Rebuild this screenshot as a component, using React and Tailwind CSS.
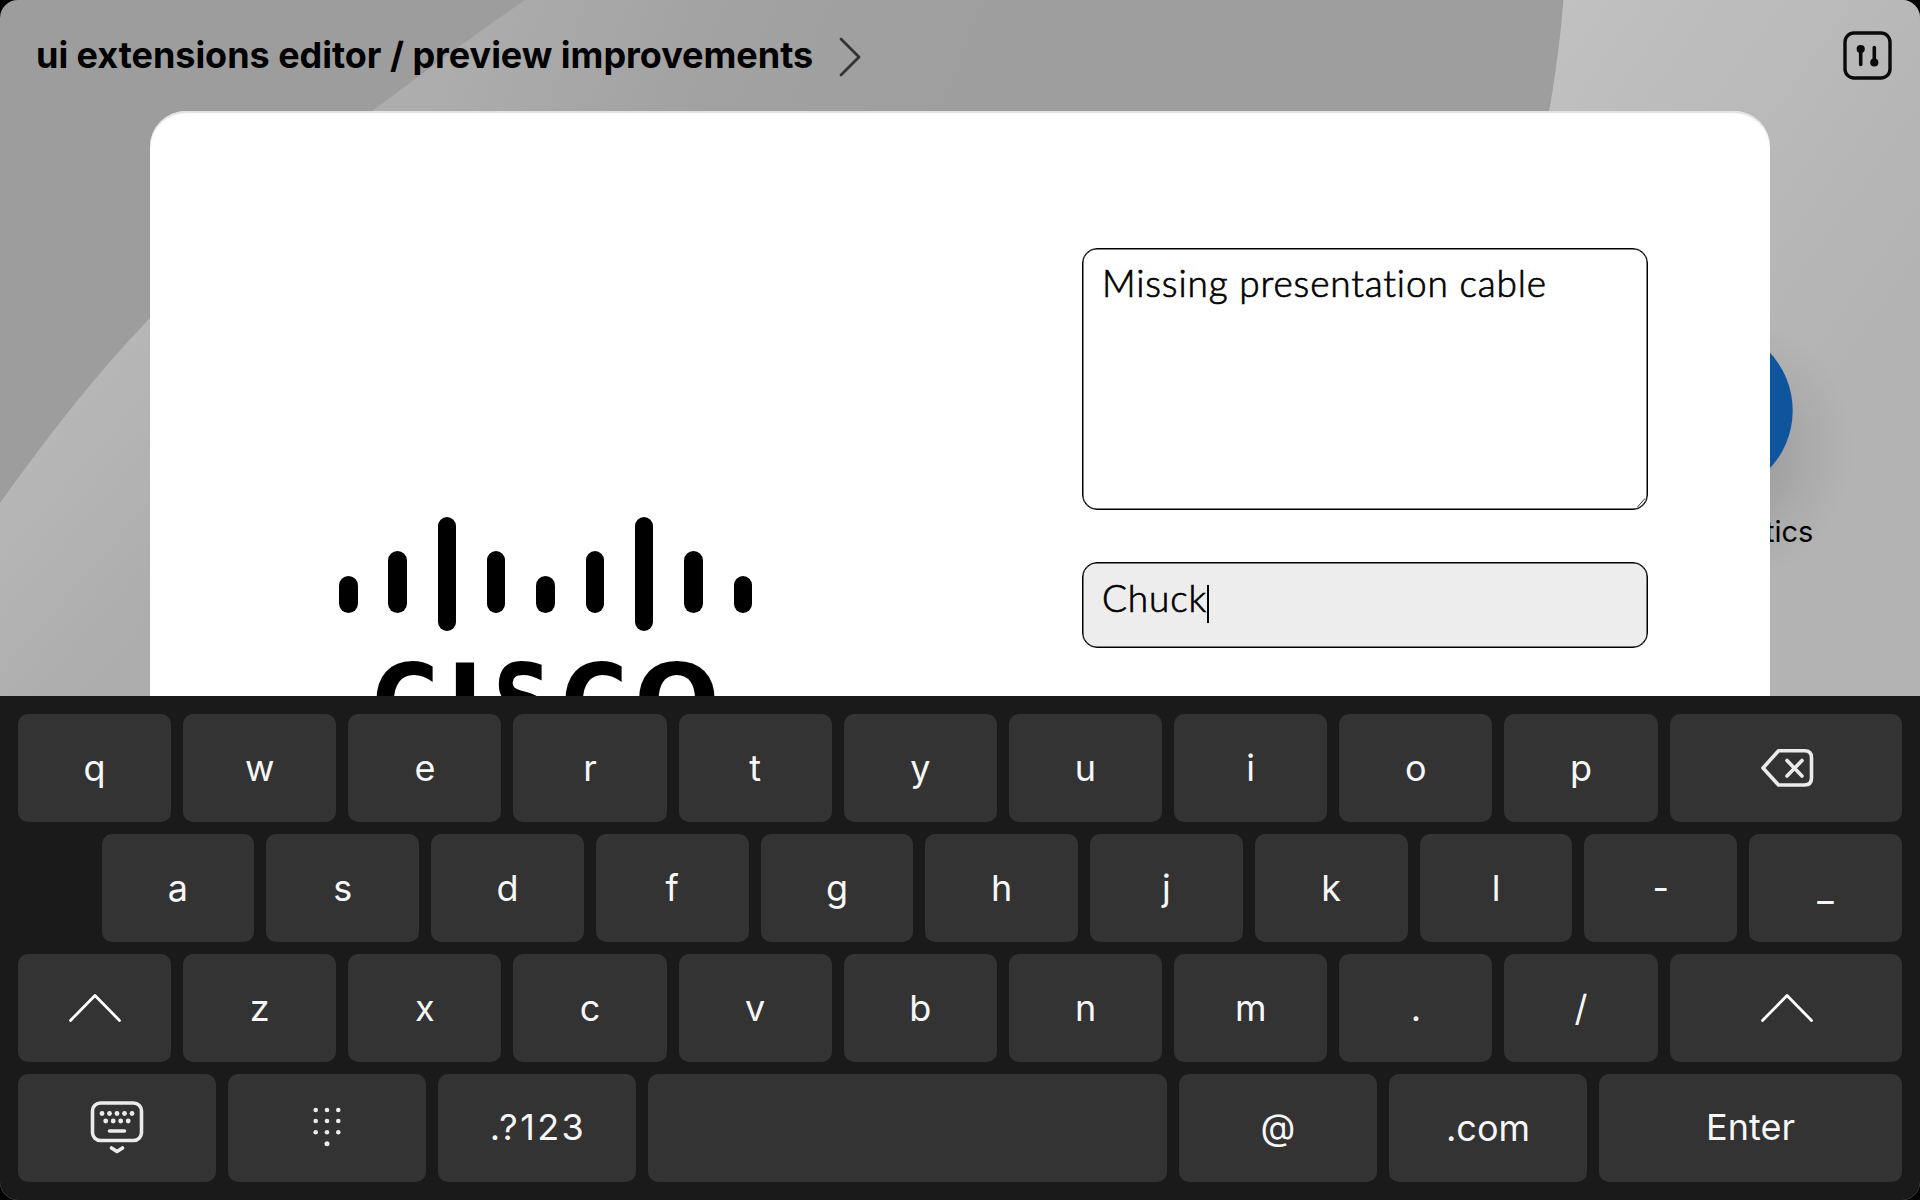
const KEY = 'flex h-[108px] min-w-0 items-center justify-center rounded-[10px] bg-[#333333]';

function Key({ children, className = 'flex-1' }) {
  return <div className={`${KEY} ${className}`}>{children}</div>;
}

function Row({ children }) {
  return <div className="flex gap-3">{children}</div>;
}

function Wallpaper() {
  return (
    <svg className="absolute inset-0" width="1920" height="1200" viewBox="0 0 1920 1200">
      <defs>
        <linearGradient id="mid" gradientUnits="userSpaceOnUse" x1="440" y1="60" x2="900" y2="240">
          <stop offset="0" stopColor="#adadad" />
          <stop offset="0.45" stopColor="#a3a3a3" />
          <stop offset="1" stopColor="#9e9e9e" />
        </linearGradient>
        <linearGradient id="low" gradientUnits="userSpaceOnUse" x1="40" y1="420" x2="200" y2="560">
          <stop offset="0" stopColor="#b7b7b7" />
          <stop offset="1" stopColor="#adadad" />
        </linearGradient>
        <linearGradient id="right" gradientUnits="userSpaceOnUse" x1="1550" y1="0" x2="1920" y2="260">
          <stop offset="0" stopColor="#c1c1c1" />
          <stop offset="1" stopColor="#b3b3b3" />
        </linearGradient>
        <radialGradient id="shade" gradientUnits="userSpaceOnUse" cx="1715" cy="450" r="140">
          <stop offset="0.4" stopColor="#000" stopOpacity="0.11" />
          <stop offset="0.7" stopColor="#000" stopOpacity="0.04" />
          <stop offset="1" stopColor="#000" stopOpacity="0" />
        </radialGradient>
      </defs>
      <rect width="1920" height="1200" fill="#9d9d9d" />
      <path d="M525 0C470 38 420 75 372 111C285 181 210 252 150 320L300 330V112H1560V0Z" fill="url(#mid)" />
      <path d="M150 318C95 375 45 440 0 503V700H300V300Z" fill="url(#low)" />
      <path d="M1563.5 0Q1559 56 1549 112V700H1920V0Z" fill="url(#right)" />
      <circle cx="1715" cy="450" r="140" fill="url(#shade)" />
      <circle cx="1708" cy="410.5" r="84.7" fill="#0f559e" />
    </svg>
  );
}

function Header() {
  return (
    <header className="relative flex h-[111px] items-center justify-between pl-9 pr-[27px]">
      <div className="flex items-center gap-[25px]">
        <h1 className="-mt-0.5 w-[778px] whitespace-nowrap text-[36px] font-bold leading-[44px] tracking-[-0.03px] text-black">
          ui extensions editor / preview improvements
        </h1>
        <svg className="mt-[3px]" width="24" height="42" viewBox="0 0 24 42" fill="none" stroke="#333" strokeWidth="2.8" strokeLinecap="round" strokeLinejoin="round">
          <path d="M2 3L20 21L2 39" />
        </svg>
      </div>
      <svg width="50" height="50" viewBox="0 0 50 50" fill="none" stroke="#0a0a0a" strokeLinecap="round">
        <rect x="2" y="2" width="45" height="45" rx="9" strokeWidth="3.4" />
        <path d="M17.7 17V33.5M31.3 16.5V33" strokeWidth="3.6" />
        <circle cx="17.7" cy="18" r="4.1" fill="#0a0a0a" stroke="none" />
        <circle cx="31.3" cy="31.5" r="4.1" fill="#0a0a0a" stroke="none" />
      </svg>
    </header>
  );
}

function Logo() {
  const bars = [
    ['h-[37px]', 'mt-[59px]'],
    ['h-[62px]', 'mt-[34px]'],
    ['h-[113.5px]', 'mt-0'],
    ['h-[62px]', 'mt-[34px]'],
    ['h-[37px]', 'mt-[59px]'],
    ['h-[62px]', 'mt-[34px]'],
    ['h-[113.5px]', 'mt-0'],
    ['h-[62px]', 'mt-[34px]'],
    ['h-[37px]', 'mt-[59px]'],
  ];
  return (
    <div className="ml-[189px] mt-[406px] w-[413px]">
      <div className="flex justify-between">
        {bars.map(([h, m], i) => (
          <span key={i} className={`w-[18.5px] rounded-full bg-black ${h} ${m}`} />
        ))}
      </div>
      <div className="mt-[16.5px] flex pl-[32.5px] font-['DejaVu_Sans'] text-[104px] font-bold leading-[110px] text-black">
        <span className="w-[75.5px] origin-left scale-x-[0.87]">C</span>
        <span className="w-[46px] origin-left scale-x-[0.93]">I</span>
        <span className="w-[67.5px] origin-left scale-x-[0.78]">S</span>
        <span className="w-[73.5px] origin-left scale-x-[0.87]">C</span>
        <span className="origin-left scale-x-[0.97]">O</span>
      </div>
    </div>
  );
}

function Form() {
  return (
    <div className="ml-auto mr-[122px] mt-[137px] flex w-[566px] flex-col gap-[52px] font-['Lato'] text-[37px] font-light leading-[44px] tracking-[0.85px] text-black [-webkit-text-stroke:0.7px_black] [font-variant-ligatures:none]">
      <div className="relative h-[262px] rounded-[15px] border border-black px-[19px] pt-3 shadow-[inset_0_0_0_0.5px_#000]">
        <span className="whitespace-nowrap">Missing presentation cable</span>
        <svg className="absolute bottom-0 right-0" width="12" height="12" viewBox="0 0 12 12" fill="none" stroke="#333" strokeWidth="1">
          <path d="M2.5 10L10 1.5M6 10L10.5 5" />
        </svg>
      </div>
      <div className="flex h-[86px] rounded-[15px] border border-black bg-[#ededed] px-[19px] pt-[13px] shadow-[inset_0_0_0_0.5px_#000]">
        <span>Chuck</span>
        <span className="mt-[9px] h-[38px] w-[1.5px] bg-black" />
      </div>
    </div>
  );
}

function Shift() {
  return (
    <svg width="54" height="32" viewBox="0 0 54 32" fill="none" stroke="#fff" strokeWidth="2.8" strokeLinecap="round" strokeLinejoin="round">
      <path d="M2.5 28.5L27 3.5L51.5 28.5" />
    </svg>
  );
}

function Backspace() {
  return (
    <svg className="ml-0.5" width="54" height="40" viewBox="0 0 54 40" fill="none" stroke="#ebebeb" strokeWidth="3.6" strokeLinecap="round" strokeLinejoin="round">
      <path d="M18.5 2.8H44.5Q51.5 2.8 51.5 9.5V30Q51.5 37 44.5 37H18.5L3 20Z" />
      <path d="M27 12.5L42 28M42 12.5L27 28" />
    </svg>
  );
}

function HideKeyboard() {
  return (
    <svg width="54" height="56" viewBox="0 0 54 56" fill="none" stroke="#ebebeb" strokeWidth="3.6" strokeLinecap="round" strokeLinejoin="round">
      <rect x="2.5" y="3" width="49" height="37.5" rx="8" />
      <path d="M19.5 31H34.5M21.5 48L27 51.5L32.5 48" />
      <g fill="#ebebeb" stroke="none">
        {[12, 19.5, 27, 34.5, 42].map((x) => <circle key={x} cx={x} cy="13.5" r="2.4" />)}
        {[15.7, 23.2, 30.7, 38.2].map((x) => <circle key={x} cx={x} cy="21" r="2.4" />)}
      </g>
    </svg>
  );
}

function Dialpad() {
  return (
    <svg width="32" height="42" viewBox="0 0 32 42" fill="#ebebeb">
      {[3, 14, 25.3].map((y) => [4.7, 16, 27.3].map((x) => <circle key={`${x}-${y}`} cx={x} cy={y} r="2.3" />))}
      <circle cx="16" cy="36.7" r="2.5" />
    </svg>
  );
}

function Keyboard() {
  return (
    <div className="relative flex h-[504px] flex-col gap-3 bg-[#1a1a1a] px-[18px] pt-[18px] text-[36px] leading-[44px] text-[#f7f7f7]">
      <Row>
        {[...'qwertyuiop'].map((k) => <Key key={k}>{k}</Key>)}
        <Key className="w-[232.5px] flex-none"><Backspace /></Key>
      </Row>
      <div className="flex gap-3 pl-[83.5px]">
        {[...'asdfghjkl-_'].map((k) => <Key key={k}>{k}</Key>)}
      </div>
      <Row>
        <Key><Shift /></Key>
        {[...'zxcvbnm./'].map((k) => <Key key={k}>{k}</Key>)}
        <Key className="w-[232.5px] flex-none pl-0.5"><Shift /></Key>
      </Row>
      <Row>
        <Key className="w-[198px] flex-none"><HideKeyboard /></Key>
        <Key className="w-[198px] flex-none"><Dialpad /></Key>
        <Key className="w-[198px] flex-none pb-0.5 pl-0.5 tracking-[2.4px]">.?123</Key>
        <Key />
        <Key className="w-[198px] flex-none pb-0.5">@</Key>
        <Key className="w-[198px] flex-none">.com</Key>
        <Key className="w-[303px] flex-none pb-0.5">Enter</Key>
      </Row>
    </div>
  );
}

export default function App() {
  return (
    <div className="h-[1200px] w-[1920px] overflow-hidden bg-black">
      <div className="relative h-full overflow-hidden rounded-[18px] font-['Inter',sans-serif]">
        <Wallpaper />
        <Header />
        <div className="relative flex h-[585px] overflow-hidden pl-[150px]">
          <main className="flex h-[900px] w-[1620px] flex-none items-start rounded-t-[36px] bg-white shadow-[inset_0_2px_1px_#e2e2e2]">
            <Logo />
            <Form />
          </main>
          <div className="-ml-[5px] pt-[404px] text-[29px] leading-[34px] text-black [clip-path:inset(0_0_0_5px)]">tics</div>
        </div>
        <Keyboard />
      </div>
    </div>
  );
}
